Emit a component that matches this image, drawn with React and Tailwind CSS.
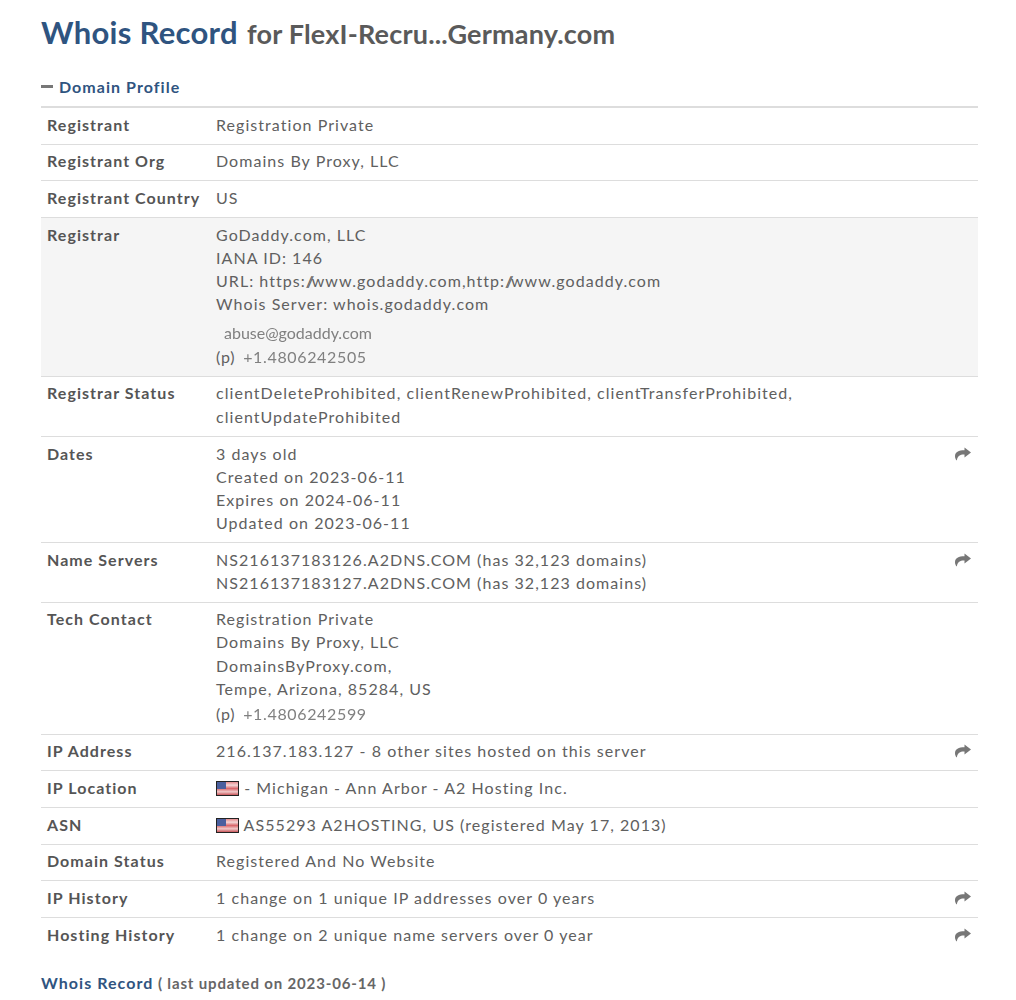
import React from "react";

const Flag = () => (
  <svg width="23" height="15" viewBox="0 0 23 15" className="inline-block align-[-2px] blur-[0.4px]">
    <defs>
      <linearGradient id="stripes" x1="0" y1="0" x2="0" y2="1">
        <stop offset="0" stopColor="#e58a8c" />
        <stop offset="0.25" stopColor="#f3d6d6" />
        <stop offset="0.5" stopColor="#d9686c" />
        <stop offset="0.75" stopColor="#f0c8c8" />
        <stop offset="1" stopColor="#c9565a" />
      </linearGradient>
    </defs>
    <rect width="23" height="15" fill="#222" />
    <rect x="1" y="1" width="21" height="13" fill="url(#stripes)" />
    <rect x="1" y="1" width="9" height="7" fill="#4a5f9e" />
  </svg>
);

const Share = () => (
  <svg width="16" height="14" viewBox="0 0 16 14" className="block">
    <path d="M9.5 0.5 L16 5.5 L9.5 10.5 V7.6 C5.5 7.4 2.8 8.4 1.8 13.5 C0.6 12.4 0 10.8 0 9.2 C0 5 3.6 3.2 9.5 3.2 Z" fill="#777" />
  </svg>
);

const Phone = ({ number, className }) => (
  <div className={`flex items-center h-[24px] ${className}`}>
    <span className="mr-2 tracking-[0.75px]">(p)</span>
    <span className="text-[#808080] tracking-[0.65px] blur-[0.3px]">{number}</span>
  </div>
);

const Slashes = () => <span className="tracking-[-2.5px]">//</span>;

const rows = [
  { label: "Registrant", value: ["Registration Private"] },
  { label: "Registrant Org", value: ["Domains By Proxy, LLC"] },
  { label: "Registrant Country", value: ["US"] },
  {
    label: "Registrar",
    shaded: true,
    value: [
      "GoDaddy.com, LLC",
      "IANA ID: 146",
      <>
        URL: https:<Slashes />www.godaddy.com,http:<Slashes />www.godaddy.com
      </>,
      "Whois Server: whois.godaddy.com",
    ],
    extra: (
      <>
        <div className="h-[6px]" />
        <div className="pl-[8px] h-[23px] text-[#808080] tracking-[0px] blur-[0.3px]">abuse@godaddy.com</div>
        <Phone number="+1.4806242505" className="mt-[1px] -mb-[1px]" />
      </>
    ),
  },
  {
    label: "Registrar Status",
    value: ["clientDeleteProhibited, clientRenewProhibited, clientTransferProhibited,", "clientUpdateProhibited"],
    tall: true,
  },
  {
    label: "Dates",
    value: ["3 days old", "Created on 2023-06-11", "Expires on 2024-06-11", "Updated on 2023-06-11"],
    action: true,
  },
  {
    label: "Name Servers",
    value: ["NS216137183126.A2DNS.COM (has 32,123 domains)", "NS216137183127.A2DNS.COM (has 32,123 domains)"],
    action: true,
  },
  {
    label: "Tech Contact",
    value: ["Registration Private", "Domains By Proxy, LLC", "DomainsByProxy.com,", "Tempe, Arizona, 85284, US"],
    extra: <Phone number="+1.4806242599" className="mt-[2px]" />,
  },
  { label: "IP Address", value: ["216.137.183.127 - 8 other sites hosted on this server"], action: true },
  {
    label: "IP Location",
    value: [
      <>
        <Flag /> - Michigan - Ann Arbor - A2 Hosting Inc.
      </>,
    ],
  },
  {
    label: "ASN",
    value: [
      <>
        <Flag /> AS55293 A2HOSTING, US (registered May 17, 2013)
      </>,
    ],
  },
  { label: "Domain Status", value: ["Registered And No Website"] },
  { label: "IP History", value: ["1 change on 1 unique IP addresses over 0 years"], action: true },
  { label: "Hosting History", value: ["1 change on 2 unique name servers over 0 year"], action: true, last: true },
];

const App = () => {
  return (
    <div className="h-[1000px] overflow-hidden bg-white pl-[41px] pr-[38px] pt-[11px] font-['Lato','Open_Sans',sans-serif] text-[16px] text-[#555] tracking-[1.05px]">
      <h1 className="h-[43px] flex items-baseline font-bold tracking-normal leading-[43px]">
        <span className="text-[31px] text-[#2f5480] tracking-[0.3px]">Whois Record</span>
        <span className="text-[27px] text-[#5a5a5a] ml-[9px] tracking-[0.2px]">for FlexI-Recru...Germany.com</span>
      </h1>

      {/* Domain Profile */}
      <div className="mt-[21px] h-[33px] flex items-start border-b-2 border-[#ddd] font-bold text-[#2f5480]">
        <span className="w-[12px] h-[3px] bg-[#777] mt-[10px] mr-[6px]" />
        <span className="leading-[23px]">Domain Profile</span>
      </div>

      <div>
        {rows.map((row) => (
          <div
            key={row.label}
            className={`flex ${row.last ? "" : "border-b border-[#ddd]"} ${row.tall ? "pt-[4.1px] pb-[6.9px]" : "pt-[4.6px] pb-[8px]"} ${row.shaded ? "bg-[#f5f5f5]" : ""}`}
          >
            <div className="w-[175px] pl-[6px] shrink-0 font-bold leading-[23px]">{row.label}</div>
            <div className="flex-1 text-[#606060]">
              {row.value.map((line, i) => (
                <div key={i} className={row.tall ? "leading-[24px]" : "leading-[23.1px]"}>
                  {line}
                </div>
              ))}
              {row.extra}
            </div>
            {row.action && (
              <div className="w-[23px] shrink-0 pt-[5px]">
                <Share />
              </div>
            )}
          </div>
        ))}
      </div>

      <div className="mt-[17px] leading-[23px]">
        <span className="font-bold text-[#2f5480]">Whois Record</span>
        <span className="font-bold text-[#666] text-[15px] tracking-[0.85px]"> ( last updated on 2023-06-14 )</span>
      </div>
    </div>
  );
};

export default App;
